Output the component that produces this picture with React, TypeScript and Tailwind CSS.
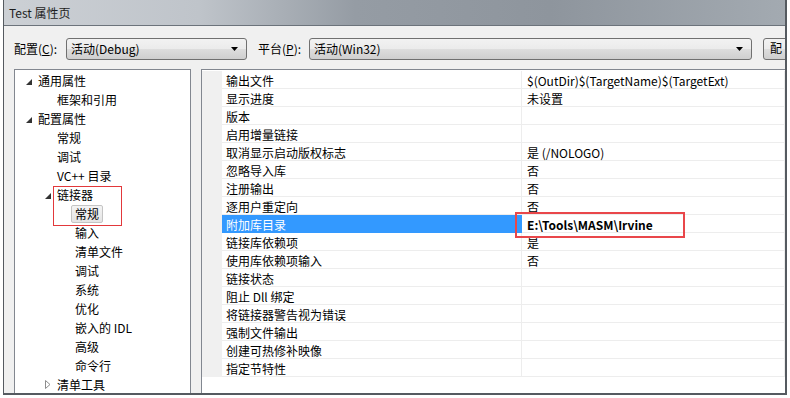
import React from "react"

type TreeItem = {
  label: string
  level: 0 | 1 | 2
  exp?: "open" | "closed"
  selected?: boolean
}

const tree: TreeItem[] = [
  { label: "通用属性", level: 0, exp: "open" },
  { label: "框架和引用", level: 1 },
  { label: "配置属性", level: 0, exp: "open" },
  { label: "常规", level: 1 },
  { label: "调试", level: 1 },
  { label: "VC++ 目录", level: 1 },
  { label: "链接器", level: 1, exp: "open" },
  { label: "常规", level: 2, selected: true },
  { label: "输入", level: 2 },
  { label: "清单文件", level: 2 },
  { label: "调试", level: 2 },
  { label: "系统", level: 2 },
  { label: "优化", level: 2 },
  { label: "嵌入的 IDL", level: 2 },
  { label: "高级", level: 2 },
  { label: "命令行", level: 2 },
  { label: "清单工具", level: 1, exp: "closed" },
]

const indent = {
  0: "pl-[7px]",
  1: "pl-[26px]",
  2: "pl-[44px]",
}

const props: [string, string][] = [
  ["输出文件", "$(OutDir)$(TargetName)$(TargetExt)"],
  ["显示进度", "未设置"],
  ["版本", ""],
  ["启用增量链接", ""],
  ["取消显示启动版权标志", "是 (/NOLOGO)"],
  ["忽略导入库", "否"],
  ["注册输出", "否"],
  ["逐用户重定向", "否"],
  ["附加库目录", "E:\\Tools\\MASM\\Irvine"],
  ["链接库依赖项", "是"],
  ["使用库依赖项输入", "否"],
  ["链接状态", ""],
  ["阻止 Dll 绑定", ""],
  ["将链接器警告视为错误", ""],
  ["强制文件输出", ""],
  ["创建可热修补映像", ""],
  ["指定节特性", ""],
]

function Expander({ state }: { state?: "open" | "closed" }) {
  return (
    <span className="w-[12px] h-[19px] flex items-center shrink-0">
      {state === "open" && (
        <svg width="6" height="6" viewBox="0 0 6 6" className="ml-[4px] mt-[2px]">
          <polygon points="6,0 6,6 0,6" fill="#333" />
        </svg>
      )}
      {state === "closed" && (
        <svg width="6" height="9" viewBox="0 0 6 9" className="ml-[4px]">
          <polygon points="0.5,0.5 5,4.5 0.5,8.5" fill="none" stroke="#8c8c8c" strokeWidth="1" />
        </svg>
      )}
    </span>
  )
}

function Combo({ text, width }: { text: string; width: string }) {
  return (
    <div
      className={`${width} h-[22px] shrink-0 flex items-center justify-between border border-[#707070] rounded-[3px] bg-[linear-gradient(#f2f2f2_0%,#ebebeb_50%,#dddddd_51%,#cfcfcf_100%)] pl-[4px] pr-[8px]`}
    >
      <span>{text}</span>
      <svg width="7" height="4" viewBox="0 0 7 4">
        <polygon points="0,0 7,0 3.5,4" fill="#000" />
      </svg>
    </div>
  )
}

export default function App() {
  return (
    <div className="w-[790px] h-[398px] bg-white relative overflow-hidden text-[12px] leading-[18px] text-black font-['Noto_Sans_CJK_SC',sans-serif]">
      <div className="ml-[3px] w-[784px] h-[395px] flex flex-col border-l border-r-2 border-b-2 border-[#555a60] overflow-hidden">
        {/* title bar */}
        <div className="h-[25px] shrink-0 flex items-center pl-[5px] text-[#1e1e1e] bg-[linear-gradient(90deg,#ccd0d5_0%,#bfc4ca_25%,#959ca4_45%,#8e959d_70%,#a3aab1_100%)]">
          Test 属性页
        </div>

        {/* client */}
        <div className="flex-1 min-h-0 flex flex-col bg-[#f0f0f0] border-t border-[#6c737b] pl-[10px] pt-[12px] overflow-hidden">
          <div className="flex items-center h-[22px] shrink-0">
            <span className="w-[52px] shrink-0">
              配置(<span className="underline">C</span>):
            </span>
            <Combo text="活动(Debug)" width="w-[181px]" />
            <span className="w-[51px] shrink-0 ml-[11px]">
              平台(<span className="underline">P</span>):
            </span>
            <Combo text="活动(Win32)" width="w-[443px]" />
            <div className="ml-[11px] w-[30px] h-[22px] shrink-0 overflow-hidden border border-[#707070] rounded-[3px] bg-[linear-gradient(#f2f2f2_0%,#ebebeb_50%,#dddddd_51%,#cfcfcf_100%)] pl-[6px] whitespace-nowrap">
              配
            </div>
          </div>

          <div className="flex mt-[9px] h-[340px] shrink-0">
            {/* tree */}
            <div className="w-[177px] h-full shrink-0 bg-white border border-[#828790] pt-[1px]">
              {tree.map((t, i) => (
                <div key={i} className={`flex items-center h-[19px] ${indent[t.level]}`}>
                  <Expander state={t.exp} />
                  <span
                    className={`px-[3px] h-[18px] flex items-center border rounded-[2px] whitespace-nowrap ${
                      t.selected
                        ? "border-[#c4c4c4] bg-[linear-gradient(#f4f4f4,#e4e4e4)]"
                        : "border-transparent"
                    }`}
                  >
                    {t.label}
                  </span>
                </div>
              ))}
            </div>

            {/* property grid */}
            <div className="flex-1 h-full ml-[10px] bg-white border-l border-t border-[#828790] pt-[1px]">
              {props.map(([name, value], i) => {
                const sel = i === 8
                return (
                  <div key={i} className="flex h-[18px] leading-[17px]">
                    <div className="w-[20px] shrink-0 bg-[#f0f0f0]" />
                    <div
                      className={`w-[300px] shrink-0 pl-[4px] pt-[1px] border-b border-r whitespace-nowrap ${
                        sel ? "bg-[#3399ff] text-white border-[#3399ff]" : "border-[#ededed]"
                      }`}
                    >
                      {name}
                    </div>
                    <div
                      className={`flex-1 pl-[5px] pt-[1px] border-b border-r border-[#ededed] whitespace-nowrap ${
                        sel ? "font-bold" : ""
                      }`}
                    >
                      {value}
                    </div>
                  </div>
                )
              })}
            </div>
          </div>
        </div>
      </div>

      {/* annotation boxes */}
      <div className="absolute left-[53px] top-[186px] w-[69px] h-[40px] border-[1.5px] border-[#e2383b]" />
      <div className="absolute left-[515px] top-[212px] w-[170px] h-[26px] border-2 border-[#e9474a]" />
    </div>
  )
}
